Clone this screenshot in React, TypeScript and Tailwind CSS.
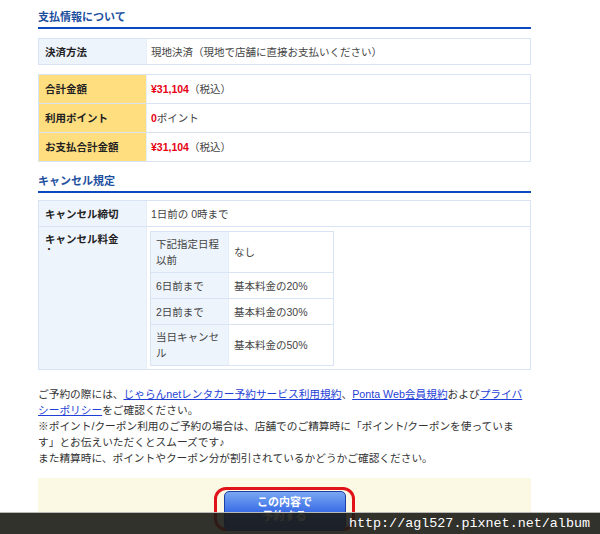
import React from "react";

const font = "font-['Liberation_Sans','Noto_Sans_CJK_JP',sans-serif]";

function Heading({ children }: { children: React.ReactNode }) {
  return (
    <div className="border-b-2 border-[#0a49bf] pb-[3px]">
      <h2 className="text-[11px] font-bold leading-[14px] text-[#1d4f9f]">{children}</h2>
    </div>
  );
}

function Row({
  label,
  children,
  yellow = false,
  last = false,
  h = "h-[28px]",
}: {
  label: React.ReactNode;
  children: React.ReactNode;
  yellow?: boolean;
  last?: boolean;
  h?: string;
}) {
  return (
    <div className={`flex ${last ? "" : "border-b border-[#d8e4f4]"}`}>
      <div
        className={`w-[108px] shrink-0 ${h} flex items-center px-[6px] font-bold text-[#222] border-r border-[#e6eef9] ${
          yellow ? "bg-[#ffde80]" : "bg-[#eef4fc]"
        }`}
      >
        {label}
      </div>
      <div className="flex-1 flex items-center pl-[4px] text-[#444]">{children}</div>
    </div>
  );
}

const fees = [
  { d: "下記指定日程以前", v: "なし", h: "h-[40px]" },
  { d: "6日前まで", v: "基本料金の20%", h: "h-[25px]" },
  { d: "2日前まで", v: "基本料金の30%", h: "h-[25px]" },
  { d: "当日キャンセル", v: "基本料金の50%", h: "h-[40px]" },
];

export default function App() {
  return (
    <div className={`relative w-[600px] h-[534px] overflow-hidden bg-white ${font} text-[10.5px] leading-[16px]`}>
      <div className="ml-[38px] w-[493px] pt-[10px]">
        <Heading>支払情報について</Heading>

        <div className="mt-[9px] border border-[#d8e4f4]">
          <Row label="決済方法" last h="h-[25px]">
            現地決済（現地で店舗に直接お支払いください）
          </Row>
        </div>

        <div className="mt-[9px] border border-[#d8e4f4]">
          <Row label="合計金額" yellow>
            <span className="font-bold text-[#e60012]">¥31,104</span>（税込）
          </Row>
          <Row label="利用ポイント" yellow>
            <span className="font-bold text-[#e60012]">0</span>ポイント
          </Row>
          <Row label="お支払合計金額" yellow last>
            <span className="font-bold text-[#e60012]">¥31,104</span>（税込）
          </Row>
        </div>

        <div className="mt-[12px]">
          <Heading>キャンセル規定</Heading>
        </div>

        <div className="mt-[7px] border border-[#d8e4f4]">
          <Row label="キャンセル締切" h="h-[25px]">
            1日前の 0時まで
          </Row>
          <div className="flex">
            <div className="w-[108px] shrink-0 bg-[#eef4fc] px-[6px] pt-[4px] font-bold text-[#222] border-r border-[#e6eef9]">
              <div>キャンセル料金</div>
              <div className="leading-[6px] text-[8px]">・</div>
            </div>
            <div className="flex-1 pl-[3px] pt-[4px] pb-[3px]">
              <div className="w-[184px] border border-[#d8e4f4] text-[#444]">
                {fees.map((f, i) => (
                  <div key={f.d} className={`flex ${i < fees.length - 1 ? "border-b border-[#d8e4f4]" : ""}`}>
                    <div className={`w-[78px] shrink-0 ${f.h} flex items-center px-[5px] bg-[#eef4fc] border-r border-[#e6eef9]`}>
                      {f.d}
                    </div>
                    <div className="flex-1 flex items-center pl-[5px]">{f.v}</div>
                  </div>
                ))}
              </div>
            </div>
          </div>
        </div>

        <div className="mt-[16px] text-[#333] text-[10.7px] leading-[16px] whitespace-nowrap">
          <p>
            ご予約の際には、<a className="text-[#1f3fd6] underline">じゃらんnetレンタカー予約サービス利用規約</a>、
            <a className="text-[#1f3fd6] underline">Ponta Web会員規約</a>および
            <a className="text-[#1f3fd6] underline">プライバ</a>
            <br />
            <a className="text-[#1f3fd6] underline">シーポリシー</a>をご確認ください。
          </p>
          <p>
            ※ポイント/クーポン利用のご予約の場合は、店舗でのご精算時に「ポイント/クーポンを使っていま
            <br />
            す」とお伝えいただくとスムーズです♪
          </p>
          <p>また精算時に、ポイントやクーポン分が割引されているかどうかご確認ください。</p>
        </div>

        <div className="mt-[12px] h-[40px] bg-[#fbf8e3] flex justify-center pt-[9px]">
          <div className="w-[141px] h-[44px] rounded-[12px] border-[3px] border-[#e0121a] flex justify-center pt-[1px]">
            <button className="w-[122px] h-[40px] rounded-[5px] border border-[#1d3fa8] bg-gradient-to-b from-[#7aa6f2] via-[#3d6fe6] to-[#1f4fd0] text-white font-bold text-[11px] leading-[14px] pt-[3px] flex flex-col items-center">
              <span>この内容で</span>
              <span>予約する</span>
            </button>
          </div>
        </div>
      </div>

      <div className="absolute left-0 bottom-0 w-full h-[22px] border-t border-[#b9b9b5] bg-[#1c1c16]/90 flex items-center justify-end pr-[10px]">
        <span className="font-['Liberation_Mono',monospace] text-[13.4px] text-white leading-[16px]">
          http://agl527.pixnet.net/album
        </span>
      </div>
    </div>
  );
}
